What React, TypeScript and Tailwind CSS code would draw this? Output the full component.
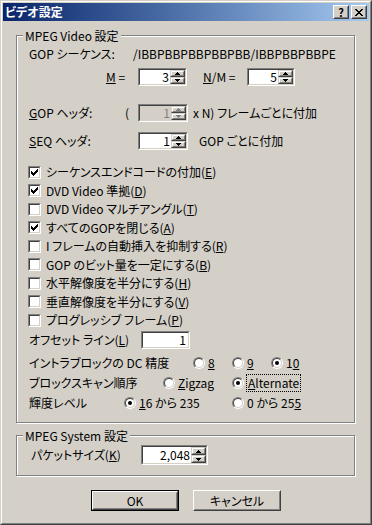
import type { ReactNode } from "react";

// classic win2000 look: sunken fields, raised buttons, etched group boxes

function Arrow({ up, disabled }: { up?: boolean; disabled?: boolean }) {
  const fill = disabled ? "#808080" : "#000";
  return (
    <svg width="5" height="3" viewBox="0 0 5 3" shapeRendering="crispEdges">
      {up ? (
        <path d="M2 0h1v1h1v1h1v1H0V2h1V1h1z" fill={fill} />
      ) : (
        <path d="M0 0h5v1H4v1H3v1H2V2H1V1H0z" fill={fill} />
      )}
    </svg>
  );
}

function SpinBtn({ up, disabled }: { up?: boolean; disabled?: boolean }) {
  return (
    <div className="flex flex-1 border border-t-[#d4d0c8] border-l-[#d4d0c8] border-r-[#404040] border-b-[#404040]">
      <div className="flex flex-1 items-center justify-center border border-t-white border-l-white border-r-[#808080] border-b-[#808080] bg-[#d4d0c8]">
        <Arrow up={up} disabled={disabled} />
      </div>
    </div>
  );
}

function Spin({
  value,
  className,
  disabled,
}: {
  value: string;
  className: string;
  disabled?: boolean;
}) {
  return (
    <div
      className={`flex shrink-0 border border-t-[#808080] border-l-[#808080] border-r-white border-b-white ${className}`}
    >
      <div className="flex flex-1 border border-t-[#404040] border-l-[#404040] border-r-[#d4d0c8] border-b-[#d4d0c8]">
        <div
          className={`flex flex-1 items-center justify-end pr-[1px] ${
            disabled ? "bg-[#d4d0c8] text-[#808080]" : "bg-white"
          }`}
        >
          {value}
        </div>
        <div className="flex w-[15px] flex-col">
          <SpinBtn up disabled={disabled} />
          <SpinBtn disabled={disabled} />
        </div>
      </div>
    </div>
  );
}

function Check({ checked }: { checked?: boolean }) {
  // 7x7 pixel check, one 1x3 column per x
  const ys = [2, 3, 4, 3, 2, 1, 0];
  return (
    <span className="flex h-[13px] w-[13px] shrink-0 border border-t-[#808080] border-l-[#808080] border-r-white border-b-white">
      <span className="flex flex-1 items-center justify-center border border-t-[#404040] border-l-[#404040] border-r-[#d4d0c8] border-b-[#d4d0c8] bg-white">
        {checked && (
          <svg width="7" height="7" viewBox="0 0 7 7" shapeRendering="crispEdges">
            {ys.map((y, x) => (
              <rect key={x} x={x} y={y} width="1" height="3" fill="#000" />
            ))}
          </svg>
        )}
      </span>
    </span>
  );
}

function Radio({ checked }: { checked?: boolean }) {
  return (
    <span className="flex h-[12px] w-[12px] shrink-0 rounded-full border border-t-[#808080] border-l-[#808080] border-r-white border-b-white">
      <span className="flex flex-1 items-center justify-center rounded-full border border-t-[#404040] border-l-[#404040] border-r-[#d4d0c8] border-b-[#d4d0c8] bg-white">
        {checked && <span className="h-[4px] w-[4px] rounded-full bg-black" />}
      </span>
    </span>
  );
}

function U({ children }: { children: ReactNode }) {
  return <span className="underline underline-offset-[1px]">{children}</span>;
}

function Group({
  title,
  className,
  children,
}: {
  title: string;
  className: string;
  children: ReactNode;
}) {
  return (
    <div
      className={`relative border border-[#808080] shadow-[inset_1px_1px_0_#fff,1px_1px_0_#fff] ${className}`}
    >
      <span className="absolute left-[6px] top-[-7px] bg-[#d4d0c8] px-[2px] leading-[13px]">
        {title}
      </span>
      {children}
    </div>
  );
}

function RadioItem({
  checked,
  focus,
  className,
  children,
}: {
  checked?: boolean;
  focus?: boolean;
  className?: string;
  children: ReactNode;
}) {
  return (
    <div className={`flex shrink-0 items-center ${className ?? ""}`}>
      <Radio checked={checked} />
      {focus ? (
        <span className="ml-[2px] border border-dotted border-black px-[1px] py-[2px]">
          {children}
        </span>
      ) : (
        <span className="ml-[3px]">{children}</span>
      )}
    </div>
  );
}

const checks = [
  { pre: "シーケンスエンドコードの付加(", k: "E", on: true, h: "h-[18px]" },
  { pre: "DVD Video 準拠(", k: "D", on: true, h: "h-[19px]" },
  { pre: "DVD Video マルチアングル(", k: "T", on: false, h: "h-[18px]" },
  { pre: "すべてのGOPを閉じる(", k: "A", on: true, h: "h-[19px]" },
  { pre: "I フレームの自動挿入を抑制する(", k: "R", on: false, h: "h-[18px]" },
  { pre: "GOP のビット量を一定にする(", k: "B", on: false, h: "h-[19px]" },
  { pre: "水平解像度を半分にする(", k: "H", on: false, h: "h-[18px]" },
  { pre: "垂直解像度を半分にする(", k: "V", on: false, h: "h-[19px]" },
  { pre: "プログレッシブ フレーム(", k: "P", on: false, h: "h-[18px]" },
];

function CloseGlyph() {
  const rows = [
    [0, 1, 6, 7],
    [1, 2, 5, 6],
    [2, 3, 4, 5],
    [3, 4],
    [2, 3, 4, 5],
    [1, 2, 5, 6],
    [0, 1, 6, 7],
  ];
  return (
    <svg width="8" height="7" viewBox="0 0 8 7" shapeRendering="crispEdges">
      {rows.map((xs, y) =>
        xs.map((x) => <rect key={`${x}-${y}`} x={x} y={y} width="1" height="1" fill="#000" />)
      )}
    </svg>
  );
}

function CaptionBtn({ children, className }: { children: ReactNode; className?: string }) {
  return (
    <div
      className={`flex h-[14px] w-[16px] border border-t-white border-l-white border-r-[#404040] border-b-[#404040] ${className ?? ""}`}
    >
      <div className="flex flex-1 items-center justify-center border border-t-[#d4d0c8] border-l-[#d4d0c8] border-r-[#808080] border-b-[#808080] bg-[#d4d0c8]">
        {children}
      </div>
    </div>
  );
}

export default function App() {
  return (
    <div className="h-[525px] w-[372px] whitespace-nowrap font-['Noto_Sans_CJK_JP',sans-serif] text-[12px] leading-none text-black [font-feature-settings:'palt']">
      <div className="flex h-full flex-col border border-t-[#d4d0c8] border-l-[#d4d0c8] border-r-[#404040] border-b-[#404040] bg-[#d4d0c8]">
        <div className="flex flex-1 flex-col border border-t-white border-l-white border-r-[#808080] border-b-[#808080] p-px">
          {/* title bar */}
          <div className="flex h-[18px] items-center bg-linear-to-r from-[#0a246a] to-[#a6caf0] pl-[2px] pr-[2px]">
            <span className="text-[12px] font-bold text-white">ビデオ設定</span>
            <div className="ml-auto flex">
              <CaptionBtn>
                <span className="text-[11px] font-bold leading-none">?</span>
              </CaptionBtn>
              <CaptionBtn className="ml-[2px]">
                <CloseGlyph />
              </CaptionBtn>
            </div>
          </div>

          <Group title="MPEG Video 設定" className="ml-[13px] mr-[14px] mt-[14px] pb-[9px] pl-[12px] pt-[10px]">
            <div className="flex h-[16px] items-center">
              <span className="w-[104px] shrink-0">GOP シーケンス:</span>
              <span>/IBBPBBPBBPBBPBB/IBBPBBPBBPE</span>
            </div>

            <div className="mt-[6px] flex h-[18px] items-center">
              <span className="ml-[77px] w-[32px] shrink-0">
                <U>M</U> =
              </span>
              <Spin value="3" className="h-[18px] w-[49px]" />
              <span className="ml-[16px] w-[44px] shrink-0">
                <U>N</U>/M =
              </span>
              <Spin value="5" className="h-[18px] w-[48px]" />
            </div>

            <div className="mt-[18px] flex h-[18px] items-center">
              <span className="w-[96px] shrink-0">
                <U>G</U>OP ヘッダ:
              </span>
              <span className="w-[13px] shrink-0">(</span>
              <Spin value="1" disabled className="h-[18px] w-[50px]" />
              <span className="ml-[5px]">x N) フレームごとに付加</span>
            </div>

            <div className="mt-[10px] flex h-[18px] items-center">
              <span className="w-[109px] shrink-0">
                <U>S</U>EQ ヘッダ:
              </span>
              <Spin value="1" className="h-[18px] w-[50px]" />
              <span className="ml-[11px]">GOP ごとに付加</span>
            </div>

            <div className="mt-[13px] -ml-px flex flex-col">
              {checks.map((c) => (
                <div key={c.k} className={`flex items-center ${c.h}`}>
                  <Check checked={c.on} />
                  <span className="ml-[5px]">
                    {c.pre}
                    <U>{c.k}</U>)
                  </span>
                </div>
              ))}
            </div>

            <div className="mt-[2px] flex h-[18px] items-center">
              <span className="w-[112px] shrink-0">
                オフセット ライン(<U>L</U>)
              </span>
              <div className="flex h-[18px] w-[49px] shrink-0 border border-t-[#808080] border-l-[#808080] border-r-white border-b-white">
                <div className="flex flex-1 items-center justify-end border border-t-[#404040] border-l-[#404040] border-r-[#d4d0c8] border-b-[#d4d0c8] bg-white pr-[2px]">
                  1
                </div>
              </div>
            </div>

            <div className="mt-[4px] flex h-[20px] items-center">
              <span className="w-[164px] shrink-0">イントラブロックの DC 精度</span>
              <RadioItem className="w-[39px]">
                <U>8</U>
              </RadioItem>
              <RadioItem className="w-[39px]">
                <U>9</U>
              </RadioItem>
              <RadioItem checked>
                1<U>0</U>
              </RadioItem>
            </div>

            <div className="flex h-[20px] items-center">
              <span className="w-[134px] shrink-0">ブロックスキャン順序</span>
              <RadioItem className="w-[69px]">
                <U>Z</U>igzag
              </RadioItem>
              <RadioItem checked focus>
                <U>A</U>lternate
              </RadioItem>
            </div>

            <div className="flex h-[20px] items-center">
              <span className="w-[95px] shrink-0">輝度レベル</span>
              <RadioItem checked className="w-[108px]">
                <U>1</U>6 から 235
              </RadioItem>
              <RadioItem>
                0 から 25<U>5</U>
              </RadioItem>
            </div>
          </Group>

          <Group title="MPEG System 設定" className="ml-[13px] mr-[14px] mt-[12px] pb-[10px] pl-[14px] pt-[9px]">
            <div className="flex h-[20px] items-center">
              <span className="w-[110px] shrink-0">
                パケットサイズ(<U>K</U>)
              </span>
              <Spin value="2,048" className="h-[20px] w-[67px]" />
            </div>
          </Group>

          <div className="mt-[14px] flex justify-center gap-[14px]">
            <div className="flex h-[21px] w-[88px] border border-black">
              <div className="flex flex-1 border border-t-white border-l-white border-r-[#404040] border-b-[#404040]">
                <div className="flex flex-1 items-center justify-center border border-t-[#d4d0c8] border-l-[#d4d0c8] border-r-[#808080] border-b-[#808080]">
                  OK
                </div>
              </div>
            </div>
            <div className="flex h-[21px] w-[88px] border border-t-white border-l-white border-r-[#404040] border-b-[#404040]">
              <div className="flex flex-1 items-center justify-center border border-t-[#d4d0c8] border-l-[#d4d0c8] border-r-[#808080] border-b-[#808080]">
                キャンセル
              </div>
            </div>
          </div>
        </div>
      </div>
    </div>
  );
}
